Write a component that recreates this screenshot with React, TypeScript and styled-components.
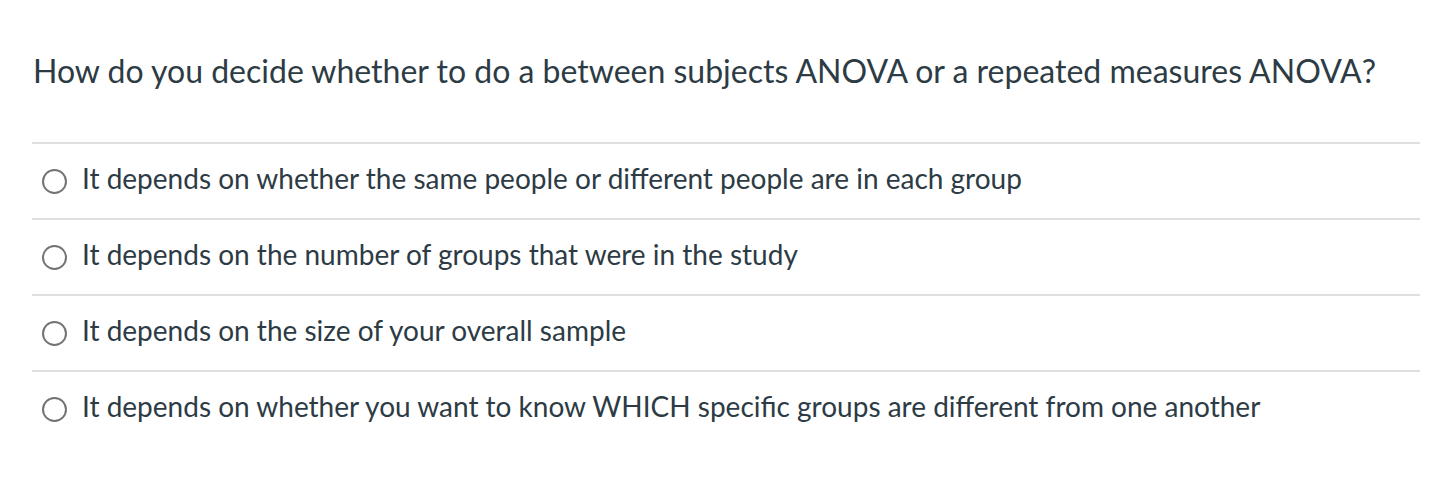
import React from 'react';
import styled, { createGlobalStyle } from 'styled-components';

const GlobalStyle = createGlobalStyle`
  html, body {
    margin: 0;
    padding: 0;
    background: #ffffff;
  }
  body {
    font-family: Lato, "Helvetica Neue", Arial, sans-serif;
    color: #2d3b45;
  }
`;

const Page = styled.div`
  padding: 0 34px 0 32px;
`;

const Question = styled.div`
  font-size: 32px;
  line-height: 40px;
  padding: 51px 0 0 1px;
  height: 142px;
  box-sizing: border-box;
`;

const Answers = styled.div`
  display: flex;
  flex-direction: column;
`;

const Answer = styled.label`
  display: flex;
  align-items: center;
  height: 76px;
  border-top: 2px solid #dfdfdf;
  box-sizing: border-box;
  padding-left: 10px;
  gap: 15px;
  font-size: 28px;
  cursor: pointer;
`;

const Radio = styled.span`
  width: 25px;
  height: 25px;
  margin-top: 1px;
  border-radius: 50%;
  border: 2px solid #737373;
  box-sizing: border-box;
  flex-shrink: 0;
  background: #fff;
`;

const AnswerText = styled.span`
  padding-bottom: 7px;
`;

const answers = [
  'It depends on whether the same people or different people are in each group',
  'It depends on the number of groups that were in the study',
  'It depends on the size of your overall sample',
  'It depends on whether you want to know WHICH specific groups are different from one another',
];

const App: React.FC = () => {
  return (
    <>
      <GlobalStyle />
      <Page>
        <Question>
          How do you decide whether to do a between subjects ANOVA or a repeated measures ANOVA?
        </Question>
        <Answers>
          {answers.map(text => (
            <Answer key={text}>
              <Radio />
              <AnswerText>{text}</AnswerText>
            </Answer>
          ))}
        </Answers>
      </Page>
    </>
  );
};

export default App;
